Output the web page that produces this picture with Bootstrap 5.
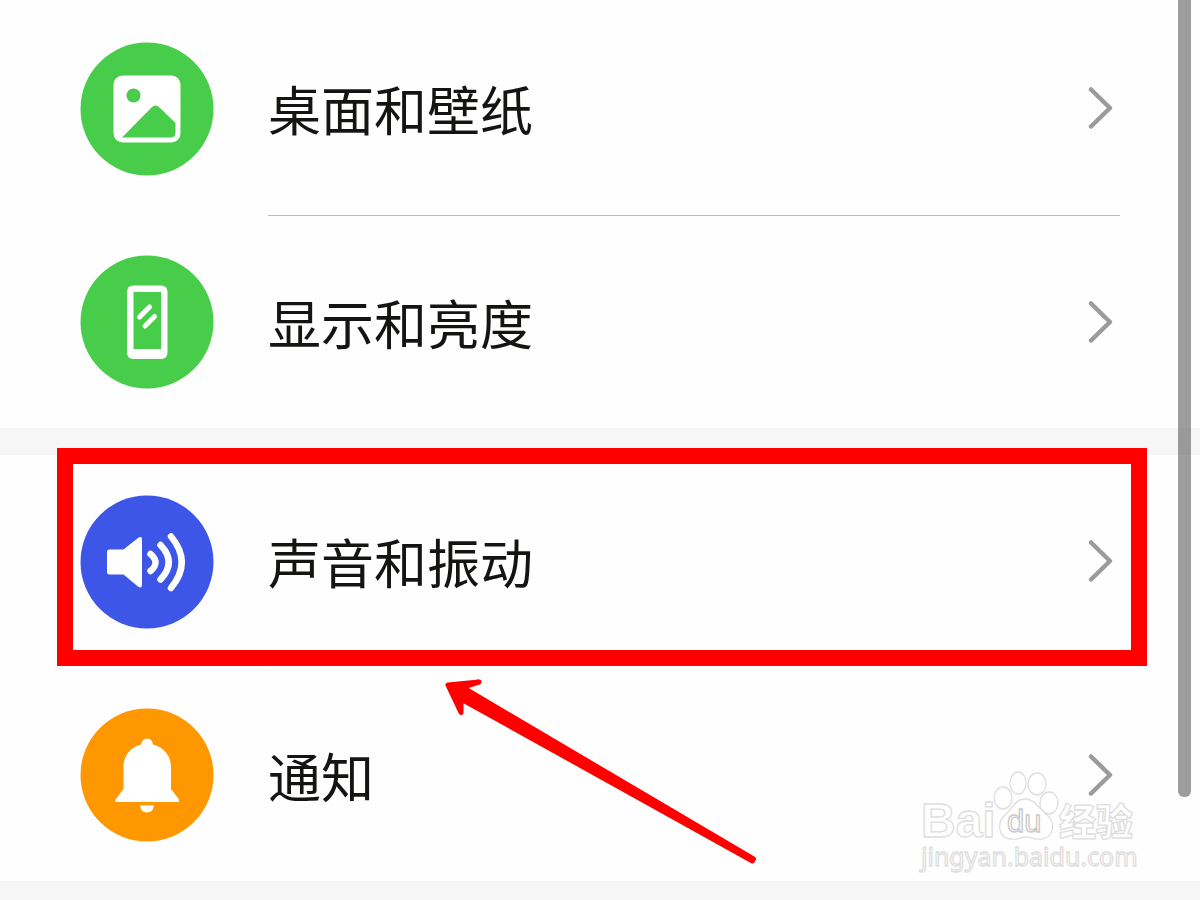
<!DOCTYPE html>
<html lang="zh-CN">
<head>
<meta charset="utf-8">
<meta name="viewport" content="width=device-width, initial-scale=1">
<title>设置</title>
<link href="https://cdn.jsdelivr.net/npm/bootstrap@5.3.0/dist/css/bootstrap.min.css" rel="stylesheet">
<style>
  body { background: #f6f6f6; font-family: "Noto Sans CJK SC", sans-serif; overflow-x: hidden; }
  .settings-group { background: #fefefe; }
  .settings-first { padding-top: 1px; }
  .settings-gap { height: 27px; }
  .setting-link { min-height: 213px; padding: 0 80px; color: #141412; font-size: 53px; line-height: 64px; gap: 54px; }
  .setting-tall { min-height: 215px; }
  .settings-first .setting-link + .setting-link { min-height: 212px; }
  .setting-icon { width: 134px; height: 134px; flex: none; }
  .setting-label { padding-right: 6px; }
  .setting-ruled { border-bottom: 1px solid #bcbcbc; }
  .setting-ruled-faint { border-bottom: 1px solid #f8f6f8; }
  .focus-frame { position: absolute; top: -7px; left: 57px; right: 53px; bottom: 2px; border: 16px solid #f00; pointer-events: none; }
  .focus-arrow { position: absolute; top: 6px; left: 440px; pointer-events: none; }
  .scroll-thumb { position: absolute; top: 0; right: 9px; width: 13px; height: 797px; background: rgba(60,60,60,.5); border-radius: 0 0 6px 6px; }
  .site-mark { position: absolute; right: 56px; bottom: 2px; pointer-events: none; }
</style>
</head>
<body>
<main class="position-relative">
  <section class="settings-group settings-first">
    <a href="#wallpaper" class="setting-link setting-tall d-flex text-decoration-none">
      <svg class="setting-icon align-self-center" viewBox="0 0 134 134" aria-hidden="true">
        <circle cx="67" cy="67" r="66.500" fill="#47cd49"/>
        <rect x="33.500" y="33.500" width="67" height="67" rx="9" fill="#fff"/>
        <circle cx="53.500" cy="53.500" r="7" fill="#47cd49"/>
        <path d="M42 95.500L71.500 65.500Q75.500 61.500 79.500 65.500L95.500 81V90.500Q95.500 95.500 90.500 95.500Z" fill="#47cd49"/>
      </svg>
      <span class="setting-label setting-ruled flex-grow-1 d-flex align-items-center justify-content-between">桌面和壁纸
        <svg width="28" height="46" viewBox="0 0 28 46" fill="none" stroke="#9b9b9b" stroke-width="4.500" stroke-linecap="round" stroke-linejoin="round" aria-hidden="true"><path d="M5 4.500L24 23L5 41.500"/></svg>
      </span>
    </a>
    <a href="#display" class="setting-link d-flex text-decoration-none">
      <svg class="setting-icon align-self-center" viewBox="0 0 134 134" aria-hidden="true">
        <circle cx="67" cy="67" r="66.500" fill="#47cd49"/>
        <rect x="47" y="30.500" width="40.500" height="73.500" rx="6" fill="#fff"/>
        <rect x="53.500" y="37" width="27.500" height="57" fill="#47cd49"/>
        <path d="M59.500 62L69.500 52M65 71L74.500 61.500" stroke="#fff" stroke-width="5" stroke-linecap="round"/>
      </svg>
      <span class="setting-label flex-grow-1 d-flex align-items-center justify-content-between">显示和亮度
        <svg width="28" height="46" viewBox="0 0 28 46" fill="none" stroke="#9b9b9b" stroke-width="4.500" stroke-linecap="round" stroke-linejoin="round" aria-hidden="true"><path d="M5 4.500L24 23L5 41.500"/></svg>
      </span>
    </a>
  </section>
  <div class="settings-gap"></div>
  <section class="settings-group">
    <div class="position-relative">
      <a href="#sound" class="setting-link d-flex text-decoration-none">
        <svg class="setting-icon align-self-center" viewBox="0 0 134 134" aria-hidden="true">
          <circle cx="67" cy="67" r="66.500" fill="#3e56e8"/>
          <path d="M29.500 54.500H43.500L58 43Q62 40.500 62 44.500V89.500Q62 94 58 91.500L43.500 79.500H29.500Q27 79.500 27 77V57Q27 54.500 29.500 54.500Z" fill="#fff"/>
          <path d="M70.500 59Q80.500 67.500 70.500 76M80.500 50Q97 67 80.500 84.500M91 41.500Q112.500 67 91 93" fill="none" stroke="#fff" stroke-width="6.500" stroke-linecap="round"/>
        </svg>
        <span class="setting-label setting-ruled-faint flex-grow-1 d-flex align-items-center justify-content-between">声音和振动
          <svg width="28" height="46" viewBox="0 0 28 46" fill="none" stroke="#9b9b9b" stroke-width="4.500" stroke-linecap="round" stroke-linejoin="round" aria-hidden="true"><path d="M5 4.500L24 23L5 41.500"/></svg>
        </span>
      </a>
      <div class="focus-frame"></div>
    </div>
    <div class="position-relative">
      <a href="#notice" class="setting-link d-flex text-decoration-none">
        <svg class="setting-icon align-self-center" viewBox="0 0 134 134" aria-hidden="true">
          <circle cx="67" cy="67" r="66.500" fill="#ff9800"/>
          <path d="M61 36.500Q62 30.500 67 30.500Q72 30.500 73 36.500C84 39.500 91 48 91 59V81L99 91.500V94H35.500V91.500L43.500 81V59C43.500 48 50 39.500 61 36.500Z" fill="#fff"/>
          <path d="M60 97.500H74Q73 104.500 67 104.500Q61 104.500 60 97.500Z" fill="#fff"/>
        </svg>
        <span class="setting-label flex-grow-1 d-flex align-items-center justify-content-between">通知
          <svg width="28" height="46" viewBox="0 0 28 46" fill="none" stroke="#9b9b9b" stroke-width="4.500" stroke-linecap="round" stroke-linejoin="round" aria-hidden="true"><path d="M5 4.500L24 23L5 41.500"/></svg>
        </span>
      </a>
      <svg class="focus-arrow" width="320" height="196" viewBox="0 0 320 196" aria-hidden="true">
        <path d="M8 11L39 8L23 13L27 16L313.500 185L312.500 187L21 25L21 38.500Z" fill="#f00" stroke="#f00" stroke-width="5" stroke-linejoin="round"/>
      </svg>
      <svg class="site-mark" width="228" height="112" viewBox="0 0 228 112" fill="#fff" stroke="#dedede" stroke-width="1.300" role="img" aria-label="Baidu 经验">
        <text x="5" y="70" font-family="Liberation Sans, sans-serif" font-weight="700" font-size="48">Bai</text>
        <ellipse cx="87" cy="31" rx="9" ry="11"/>
        <ellipse cx="102" cy="16" rx="8" ry="11"/>
        <ellipse cx="121" cy="17" rx="9" ry="11"/>
        <ellipse cx="133" cy="36" rx="9" ry="11"/>
        <path d="M109 32C99 32 96 42 89 48C80 56 83 71 94 72C103 73 104 70 110 70C116 70 118 73 126 72C138 70 140 56 131 48C123 42 119 32 109 32Z"/>
        <text x="91" y="65" font-family="Liberation Sans, sans-serif" font-size="31" stroke="#c8c8c8">du</text>
        <text x="143" y="69" font-family="Noto Sans CJK SC, sans-serif" font-weight="900" font-size="37">经验</text>
        <text x="5" y="99" font-family="Noto Sans, sans-serif" font-size="25">jingyan.baidu.com</text>
      </svg>
    </div>
  </section>
  <div class="scroll-thumb"></div>
</main>
<script src="https://cdn.jsdelivr.net/npm/bootstrap@5.3.0/dist/js/bootstrap.bundle.min.js"></script>
</body>
</html>
